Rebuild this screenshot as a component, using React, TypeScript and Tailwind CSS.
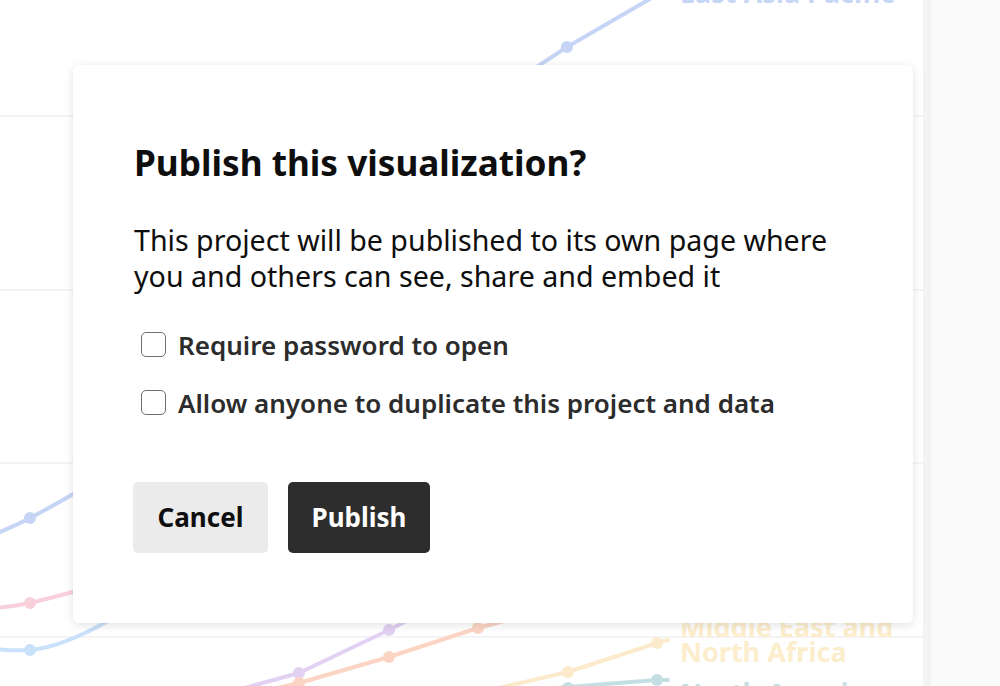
import React from "react";

function Chart() {
  return (
    <svg className="absolute inset-0" width="923" height="686" viewBox="0 0 923 686">
      {[116, 290, 463, 637].map((y) => (
        <line key={y} x1="0" x2="923" y1={y} y2={y} stroke="#f1f1f1" strokeWidth="1.5" />
      ))}
      <g fill="none" strokeWidth="4" strokeLinecap="round" strokeLinejoin="round">
        <path d="M520 78 L567 47 L655 -4" stroke="#c6d5f5" />
        <path d="M-5 534 Q15 526 30 518 Q55 505 80 490" stroke="#c6d5f5" />
        <path d="M-5 608 Q15 606 30 603 Q55 597 80 590" stroke="#f8d0dc" />
        <path d="M-5 649 Q15 651 30 650 Q60 648 110 620" stroke="#c9e1fa" />
        <path d="M230 692 L299 673 L389 630 L420 614" stroke="#e2d1f2" />
        <path d="M260 692 L299 683 L389 657 L478 628 L515 618" stroke="#fbd4c4" />
        <path d="M490 690 L568 672 L657 643 L668 640" stroke="#fbeacb" />
        <path d="M540 690 L568 687 L657 680 L668 680" stroke="#c4dfe3" />
      </g>
      <g>
        <circle cx="567" cy="47" r="6" fill="#c6d5f5" />
        <circle cx="30" cy="518" r="6" fill="#c6d5f5" />
        <circle cx="30" cy="603" r="6" fill="#f8d0dc" />
        <circle cx="30" cy="650" r="6" fill="#c9e1fa" />
        <circle cx="299" cy="673" r="6" fill="#e2d1f2" />
        <circle cx="389" cy="630" r="6" fill="#e2d1f2" />
        <circle cx="299" cy="683" r="6" fill="#fbd4c4" />
        <circle cx="389" cy="657" r="6" fill="#fbd4c4" />
        <circle cx="478" cy="628" r="6" fill="#fbd4c4" />
        <circle cx="568" cy="672" r="6" fill="#fbeacb" />
        <circle cx="657" cy="643" r="6" fill="#fbeacb" />
        <circle cx="568" cy="688" r="6" fill="#c4dfe3" />
        <circle cx="657" cy="680" r="6" fill="#c4dfe3" />
      </g>
      <g fontFamily="'Noto Sans', sans-serif" fontWeight="700" fontSize="27">
        <text x="680" y="3" fill="#c8d6f6">East Asia Pacific</text>
        <text x="680" y="637" fill="#fcedcc">Middle East and</text>
        <text x="680" y="662" fill="#fcedcc">North Africa</text>
        <text x="680" y="703" fill="#c6e0e4">North America</text>
      </g>
    </svg>
  );
}

function Checkbox({ label }: { label: string }) {
  return (
    <label className="flex items-center gap-3 h-[25px]">
      <span className="w-[25px] h-[25px] rounded-[5px] border-[1.5px] border-[#6f6f6f] bg-white shrink-0" />
      <span className="text-[26px] font-semibold text-[#2c2c2c] leading-none">{label}</span>
    </label>
  );
}

export default function App() {
  return (
    <div
      className="relative w-[1000px] h-[686px] overflow-hidden bg-white flex"
      style={{ fontFamily: "'Noto Sans', sans-serif" }}
    >
      <div className="relative w-[923px] h-full">
        <Chart />
      </div>
      <div className="flex-1 h-full flex">
        <div className="w-[8px] h-full bg-[#f3f3f3]" />
        <div className="flex-1 h-full bg-[#fafafa]" />
      </div>

      <div className="absolute left-[73px] top-[65px] w-[840px] h-[558px] bg-white rounded-[6px] shadow-[0_2px_10px_rgba(0,0,0,0.12)] px-[61px] pt-[75px] flex flex-col">
        <h1 className="text-[35.2px] font-bold text-[#0e0e0e] leading-[44px]">
          Publish this visualization?
        </h1>
        <p className="mt-[38px] text-[28.6px] text-[#0e0e0e] leading-[36px] whitespace-nowrap">
          This project will be published to its own page where
          <br />
          you and others can see, share and embed it
        </p>
        <div className="mt-[38px] flex flex-col gap-[33px] pl-[7px]">
          <Checkbox label="Require password to open" />
          <Checkbox label="Allow anyone to duplicate this project and data" />
        </div>
        <div className="mt-[67px] flex gap-[20px] -ml-[1px]">
          <button className="w-[135px] h-[71px] rounded-[5px] bg-[#ebebeb] text-[26px] font-bold text-[#0e0e0e]">
            Cancel
          </button>
          <button className="w-[142px] h-[71px] rounded-[5px] bg-[#2d2d2d] text-[26px] font-bold text-white">
            Publish
          </button>
        </div>
      </div>
    </div>
  );
}
